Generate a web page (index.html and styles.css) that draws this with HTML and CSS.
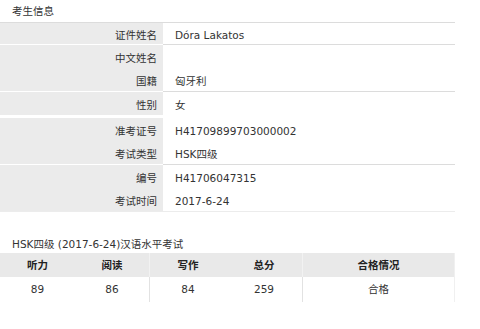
FILE: index.html
```html
<!DOCTYPE html>
<html lang="zh">
<head>
<meta charset="utf-8">
<title>考生信息</title>
<link rel="stylesheet" href="styles.css">
</head>
<body>
<div class="page">
  <div class="section-title">考生信息</div>
  <div class="info info-first">
    <div class="row sep"><div class="label">证件姓名</div><div class="value">Dóra Lakatos</div></div>
    <div class="row"><div class="label">中文姓名</div><div class="value"></div></div>
    <div class="row sep"><div class="label">国籍</div><div class="value">匈牙利</div></div>
    <div class="row"><div class="label">性别</div><div class="value">女</div></div>
  </div>
  <div class="info info-second">
    <div class="row"><div class="label">准考证号</div><div class="value">H41709899703000002</div></div>
    <div class="row sep"><div class="label">考试类型</div><div class="value">HSK四级</div></div>
    <div class="row"><div class="label">编号</div><div class="value">H41706047315</div></div>
    <div class="row"><div class="label">考试时间</div><div class="value">2017-6-24</div></div>
  </div>
  <div class="score-title">HSK四级 (2017-6-24)汉语水平考试</div>
  <div class="scores">
    <div class="cell head">听力</div>
    <div class="cell head div">阅读</div>
    <div class="cell head">写作</div>
    <div class="cell head div">总分</div>
    <div class="cell head last">合格情况</div>
    <div class="cell">89</div>
    <div class="cell div">86</div>
    <div class="cell">84</div>
    <div class="cell div">259</div>
    <div class="cell last">合格</div>
  </div>
</div>
</body>
</html>
```
FILE: styles.css
```css
html, body {
  margin: 0;
  padding: 0;
  background: #fff;
}
body {
  font-family: "DejaVu Sans", "Noto Sans CJK SC", sans-serif;
  font-size: 10.5px;
  color: #333;
}
.page {
  width: 480px;
}
.section-title {
  height: 22px;
  line-height: 23px;
  padding-left: 12px;
}
.info {
  width: 455px;
  display: flex;
  flex-direction: column;
}
.info-first {
  border-top: 1px solid #dcdcdc;
}
.info-first .row:first-child {
  height: 22px;
}
.info-second {
  margin-top: 3px;
  border-bottom: 1px solid #ececec;
}
.row {
  display: grid;
  grid-template-columns: 163px 1fr;
  height: 23px;
}
.row.sep {
  height: 24px;
}
.label,
.value {
  display: flex;
  align-items: center;
  box-sizing: border-box;
  padding-top: 2px;
}
.label {
  background: #ebebeb;
  justify-content: flex-end;
  padding-right: 6px;
}
.value {
  padding-left: 12px;
}
.row.sep .label {
  border-bottom: 1px solid #fff;
}
.row.sep .value {
  border-bottom: 1px solid #dcdcdc;
}
.score-title {
  margin-top: 21px;
  height: 20px;
  line-height: 22px;
  padding-left: 12px;
}
.scores {
  width: 455px;
  display: grid;
  grid-template-columns: 75px 75px 76px 77px 152px;
  grid-template-rows: 24px 25px;
}
.cell {
  text-align: center;
  line-height: 25px;
}
.cell.head {
  background: #e9e9e9;
  font-weight: bold;
  color: #222;
}
.cell.div {
  border-right: 1px solid #e2e2e2;
}
.cell.head.div {
  border-right-color: #f2f2f2;
}
.cell.last {
  border-right: 1px solid #f0f0f0;
}
```
